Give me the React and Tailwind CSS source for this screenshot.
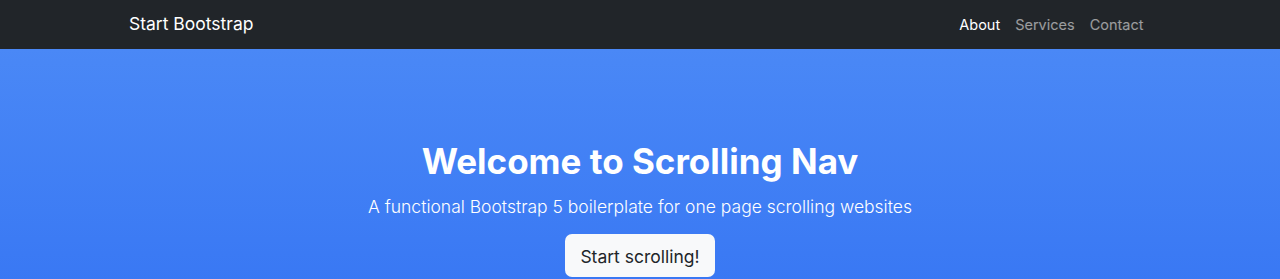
import React from 'react';

const links = ['About', 'Services', 'Contact'];

export default function App() {
  return (
    <div className="min-h-screen w-full font-['Inter',sans-serif] text-white">
      {/* Navbar */}
      <nav className="h-[49px] bg-[#212529]">
        <div className="mx-auto flex h-full w-[1022px] items-center justify-between pb-[2px]">
          <a href="#" className="text-[17.5px] leading-none">Start Bootstrap</a>
          <ul className="flex items-center">
            {links.map((link, i) => (
              <li key={link}>
                <a
                  href="#"
                  className={`px-[7.5px] text-[14.5px] ${i === 0 ? 'text-white' : 'text-white/55'}`}
                >
                  {link}
                </a>
              </li>
            ))}
          </ul>
        </div>
      </nav>

      {/* Header */}
      <header className="bg-gradient-to-b from-[#4a88f6] to-[#3574f3] pt-[91px] pb-[60px] text-center">
        <h1 className="mb-[12px] text-[35px] font-bold leading-[42px]">Welcome to Scrolling Nav</h1>
        <p className="mb-[14px] text-[17.5px] font-light leading-[26px]">
          A functional Bootstrap 5 boilerplate for one page scrolling websites
        </p>
        <a
          href="#"
          className="inline-block rounded-[7px] bg-[#f8f9fa] px-[15px] pt-[10px] pb-[7px] text-[17.5px] leading-[26px] text-[#212529]"
        >
          Start scrolling!
        </a>
      </header>
    </div>
  );
}
